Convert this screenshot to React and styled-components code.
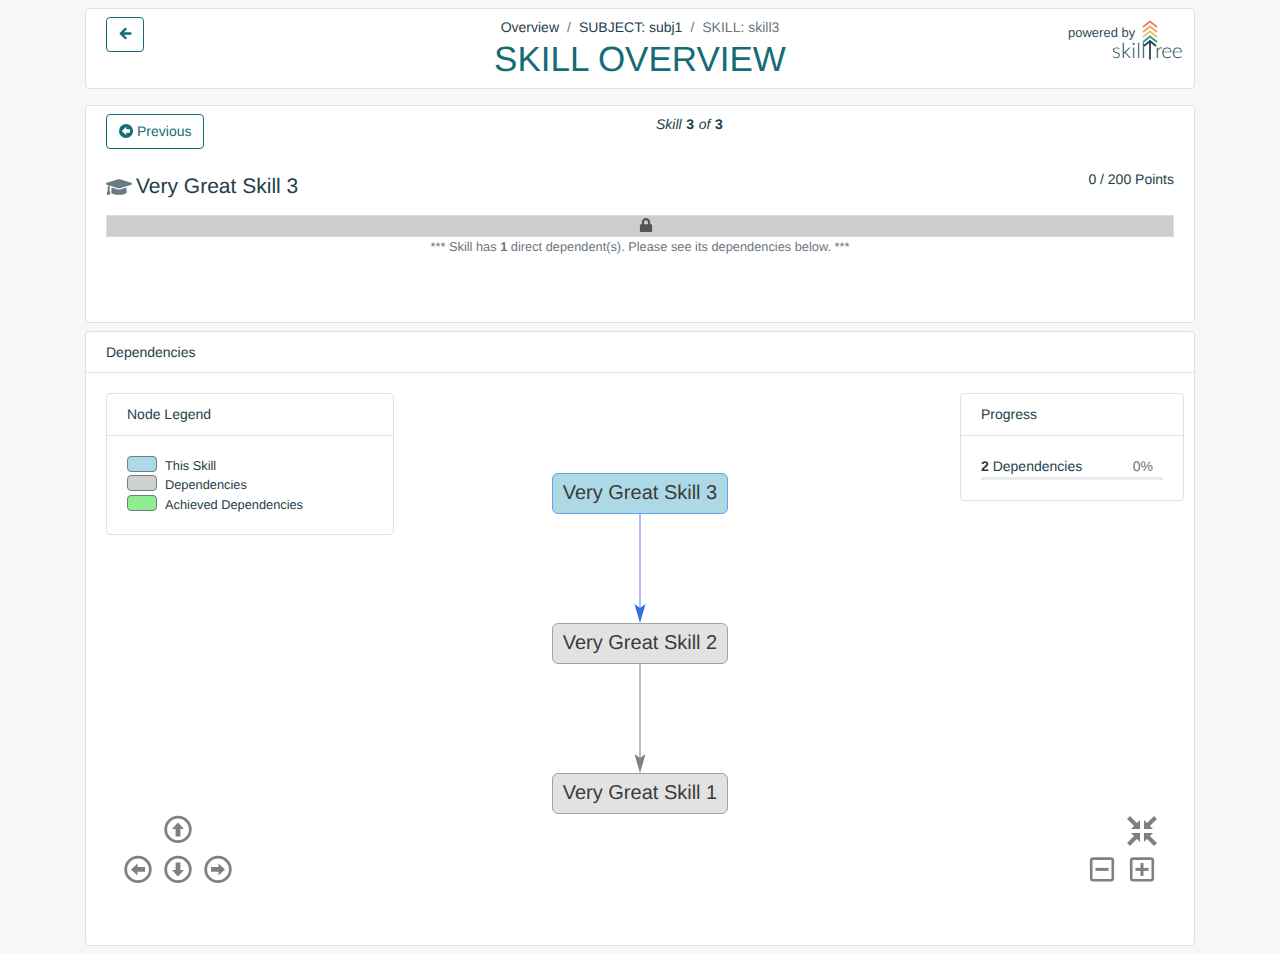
import React from "react";
import styled, { createGlobalStyle } from "styled-components";
import { FaArrowLeft, FaGraduationCap, FaLock } from "react-icons/fa";

const GlobalStyle = createGlobalStyle`
  html, body {
    margin: 0;
    padding: 0;
    background: #f7f7f7;
    font-family: "Liberation Sans", Arial, sans-serif;
    font-size: 14px;
    color: #1f3d4a;
    text-rendering: geometricPrecision;
  }
  button {
    text-rendering: geometricPrecision;
  }
`;

const Page = styled.div`
  width: 1110px;
  margin: 0 auto;
  padding-top: 8px;
`;

const Card = styled.div`
  background: #fff;
  border: 1px solid #dfe1e3;
  border-radius: 4px;
  box-sizing: border-box;
  margin-bottom: ${({ $gap }) => $gap || 0}px;
  height: ${({ $height }) => ($height ? `${$height}px` : "auto")};
`;

const HeaderCard = styled(Card)`
  display: grid;
  grid-template-columns: 1fr auto 1fr;
  padding: 8px 20px 0;
`;

const OutlineButton = styled.button`
  display: inline-flex;
  align-items: center;
  justify-content: center;
  gap: 4px;
  box-sizing: border-box;
  height: 35px;
  padding: 0 12px 1px;
  background: #fff;
  border: 1px solid #146c75;
  border-radius: 4px;
  color: #146c75;
  font: 14px "Liberation Sans", Arial, sans-serif;
`;

const BackButton = styled(OutlineButton)`
  width: 38px;
  padding: 0 0 2px;
  svg {
    stroke: currentColor;
    stroke-width: 24px;
  }
`;

const Center = styled.div`
  text-align: center;
`;

const Crumbs = styled.div`
  display: flex;
  justify-content: center;
  gap: 8px;
  margin-top: 2px;
  line-height: 16px;
  color: #6c757d;
`;

const CrumbLink = styled.span`
  color: ${({ $muted }) => ($muted ? "#6c757d" : "#1f3d4a")};
`;

const Title = styled.h1`
  margin: 4px 0 0;
  font-size: 35px;
  line-height: 42px;
  font-weight: 400;
  color: #146c75;
`;

const Powered = styled.div`
  position: relative;
  justify-self: end;
  width: 115px;
  height: 60px;
  margin-right: -8px;
`;

const PoweredBy = styled.div`
  position: absolute;
  left: 1px;
  top: 8px;
  font-size: 13px;
  line-height: 16px;
  color: #2d4a57;
`;

const LogoWord = styled.div`
  position: absolute;
  right: 0;
  top: 22px;
  display: flex;
  font-family: Lato, sans-serif;
  font-weight: 300;
  font-size: 21px;
  line-height: 24px;
  color: #264653;
`;

const LogoPart = styled.span`
  margin-right: ${({ $gap }) => $gap || 0}px;
  letter-spacing: ${({ $spacing }) => $spacing}px;
`;

const TreeSlot = styled.svg`
  position: absolute;
  left: 74px;
  top: 3px;
  display: block;
`;

const SkillCard = styled(Card)`
  padding: 8px 20px 0;
`;

const TopRow = styled.div`
  position: relative;
  height: 35px;
`;

const SkillCount = styled.div`
  position: absolute;
  left: 550px;
  top: 2px;
  font-style: italic;
  line-height: 16px;
  word-spacing: 0.7px;
  b {
    font-style: normal;
  }
`;

const NameRow = styled.div`
  display: flex;
  justify-content: space-between;
  margin-top: 24px;
`;

const SkillName = styled.div`
  display: flex;
  align-items: center;
  gap: 4px;
  font-size: 21px;
  line-height: 28px;
  svg {
    color: #6a7b83;
  }
`;

const Points = styled.div`
  line-height: 16px;
  margin-top: -2px;
`;

const LockBar = styled.div`
  display: flex;
  align-items: center;
  justify-content: center;
  height: 22px;
  margin-top: 14px;
  padding: 0 0 2px 12px;
  box-sizing: border-box;
  background: #cdcdcd;
  border: 1px solid #dcdcdc;
  color: #555;
`;

const LockNote = styled.div`
  margin-top: 2px;
  text-align: center;
  font-size: 12.8px;
  line-height: 15px;
  color: #6c757d;
`;

const CardHeading = styled.div`
  box-sizing: border-box;
  height: ${({ $height }) => $height}px;
  padding-left: 20px;
  display: flex;
  align-items: center;
  border-bottom: 1px solid #dfe1e3;
`;

const PanelHeading = styled(CardHeading)`
  padding-bottom: 2px;
`;

const Canvas = styled.div`
  position: relative;
  height: 572px;
`;

const FloatPanel = styled(Card)`
  position: absolute;
  top: 20px;
  left: ${({ $left }) => $left}px;
  width: ${({ $width }) => $width}px;
  height: ${({ $height }) => $height}px;
`;

const LegendList = styled.div`
  display: flex;
  flex-direction: column;
  padding: 19.5px 20px 0;
`;

const LegendRow = styled.div`
  display: flex;
  align-items: center;
  gap: 8px;
  height: 19.5px;
  font-size: 12.8px;
`;

const Swatch = styled.span`
  box-sizing: border-box;
  width: 30px;
  height: 16px;
  margin-bottom: 3px;
  background: ${({ $color }) => $color};
  border: 1px solid #6b7f88;
  border-radius: 4px;
`;

const ProgressBody = styled.div`
  padding: 22px 20px 0;
`;

const ProgressLine = styled.div`
  display: flex;
  justify-content: space-between;
  padding-right: 10px;
  line-height: 16px;
  em {
    font-style: normal;
    color: #6c757d;
  }
`;

const ProgressTrack = styled.div`
  height: 3px;
  margin-top: 3px;
  background: #ececec;
`;

const Node = styled.div`
  position: absolute;
  left: ${({ $x }) => $x}px;
  top: ${({ $y }) => $y}px;
  box-sizing: border-box;
  width: 176px;
  height: 41px;
  display: flex;
  align-items: center;
  justify-content: center;
  background: ${({ $active }) => ($active ? "#add8e6" : "#e2e2e2")};
  border: 1px solid ${({ $active }) => ($active ? "#6d9eeb" : "#a3a3a3")};
  border-radius: 6px;
  font-size: 20px;
  color: #3b3b3b;
`;

const EdgeLayer = styled.svg`
  position: absolute;
  left: 444px;
  top: 130px;
`;

const NavIcon = styled.svg`
  position: absolute;
  left: ${({ $x }) => $x}px;
  top: ${({ $y }) => $y}px;
`;

const GREY = "#808080";

const PrevIcon = () => (
  <svg width="14" height="14" viewBox="0 0 14 14">
    <circle cx="7" cy="7" r="7" fill="currentColor" />
    <path d="M2.8 7 L7.3 2.8 V5.2 H11 V8.8 H7.3 V11.2 Z" fill="#fff" />
  </svg>
);

const ArrowCircle = ({ x, y, rotate }) => (
  <NavIcon $x={x} $y={y} width="30" height="30" viewBox="0 0.6 30 30">
    <circle cx="15" cy="15" r="12.3" fill="none" stroke={GREY} strokeWidth="2.8" />
    <path
      transform={`rotate(${rotate} 15 15)`}
      d="M15 8 L21 14.5 H17.4 V22 H12.6 V14.5 H9 Z"
      fill={GREY}
    />
  </NavIcon>
);

const ZoomBox = ({ x, y, plus }) => (
  <NavIcon $x={x} $y={y} width="28" height="28" viewBox="0 0.6 28 28">
    <rect x="3.2" y="3.2" width="21.6" height="21.6" rx="2" fill="none" stroke={GREY} strokeWidth="2.6" />
    <path d="M7.5 12.5 H20.5 V15.5 H7.5 Z" fill={GREY} />
    {plus && <path d="M12.5 7.5 H15.5 V20.5 H12.5 Z" fill={GREY} />}
  </NavIcon>
);

const FitIcon = ({ x, y }) => (
  <NavIcon $x={x} $y={y} width="32" height="32" viewBox="0 0 32 32">
    {[0, 90, 180, 270].map((r) => (
      <g key={r} transform={`rotate(${r} 16 16)`}>
        <path d="M14 14 H5 L14 5 Z" fill={GREY} />
        <path d="M2.5 2.5 L10 10" stroke={GREY} strokeWidth="4" fill="none" />
      </g>
    ))}
  </NavIcon>
);

const TreeMark = () => (
  <TreeSlot width="18" height="42" viewBox="0 0 18 42">
    <g fill="none" strokeWidth="1.8">
      <path d="M2 7 L9 1.5 L16 7" stroke="#ef7f62" />
      <path d="M2 12 L9 6.5 L16 12" stroke="#f4a261" />
      <path d="M2 17 L9 11.5 L16 17" stroke="#e9c46a" />
      <path d="M2 22 L9 16.5 L16 22" stroke="#2a9d8f" />
      <path d="M3 26 L9 21 L15 26" stroke="#264653" />
      <path d="M9 21.5 V39.5" stroke="#264653" />
    </g>
  </TreeSlot>
);

const Edge = ({ from, to, line, head }) => (
  <>
    <path d={`M110 ${from} V${to - 12}`} stroke={line} strokeWidth="1.5" fill="none" />
    <path d={`M104.5 ${to - 19} L110 ${to} L115.5 ${to - 19} L110 ${to - 15} Z`} fill={head} />
  </>
);

export default function App() {
  return (
    <>
      <GlobalStyle />
      <Page>
        <HeaderCard $gap={16} $height={81}>
          <div>
            <BackButton>
              <FaArrowLeft size={13} />
            </BackButton>
          </div>
          <Center>
            <Crumbs>
              <CrumbLink>Overview</CrumbLink>
              <span>/</span>
              <CrumbLink>SUBJECT: subj1</CrumbLink>
              <span>/</span>
              <CrumbLink $muted>SKILL: skill3</CrumbLink>
            </Crumbs>
            <Title>SKILL OVERVIEW</Title>
          </Center>
          <Powered>
            <PoweredBy>powered by</PoweredBy>
            <TreeMark />
            <LogoWord>
              <LogoPart $spacing={0.3} $gap={9}>skill</LogoPart>
              <LogoPart $spacing={-0.6}>ree</LogoPart>
            </LogoWord>
          </Powered>
        </HeaderCard>

        <SkillCard $gap={8} $height={218}>
          <TopRow>
            <OutlineButton>
              <PrevIcon />
              Previous
            </OutlineButton>
            <SkillCount>
              Skill <b>3</b> of <b>3</b>
            </SkillCount>
          </TopRow>
          <NameRow>
            <SkillName>
              <FaGraduationCap size={26} />
              Very Great Skill 3
            </SkillName>
            <Points>0 / 200 Points</Points>
          </NameRow>
          <LockBar>
            <FaLock size={14} />
          </LockBar>
          <LockNote>
            *** Skill has <b>1</b> direct dependent(s). Please see its dependencies below. ***
          </LockNote>
        </SkillCard>

        <Card $height={615}>
          <CardHeading $height={41}>Dependencies</CardHeading>
          <Canvas>
            <EdgeLayer width="220" height="280" viewBox="0 0 220 280">
              <Edge from={10} to={120} line="#8fb1ef" head="#2f6fde" />
              <Edge from={160} to={270} line="#a8a8a8" head="#808080" />
            </EdgeLayer>
            <Node $x={466} $y={100} $active>Very Great Skill 3</Node>
            <Node $x={466} $y={250}>Very Great Skill 2</Node>
            <Node $x={466} $y={400}>Very Great Skill 1</Node>

            <FloatPanel $left={20} $width={288} $height={142}>
              <PanelHeading $height={42}>Node Legend</PanelHeading>
              <LegendList>
                <LegendRow><Swatch $color="#add8e6" />This Skill</LegendRow>
                <LegendRow><Swatch $color="#d0d0d0" />Dependencies</LegendRow>
                <LegendRow><Swatch $color="#90ee90" />Achieved Dependencies</LegendRow>
              </LegendList>
            </FloatPanel>

            <FloatPanel $left={874} $width={224} $height={108}>
              <PanelHeading $height={42}>Progress</PanelHeading>
              <ProgressBody>
                <ProgressLine>
                  <span><b>2</b> Dependencies</span>
                  <em>0%</em>
                </ProgressLine>
                <ProgressTrack />
              </ProgressBody>
            </FloatPanel>

            <ArrowCircle x={77} y={442} rotate={0} />
            <ArrowCircle x={37} y={482} rotate={270} />
            <ArrowCircle x={77} y={482} rotate={180} />
            <ArrowCircle x={117} y={482} rotate={90} />
            <FitIcon x={1040} y={442} />
            <ZoomBox x={1002} y={483} />
            <ZoomBox x={1042} y={483} plus />
          </Canvas>
        </Card>
      </Page>
    </>
  );
}
